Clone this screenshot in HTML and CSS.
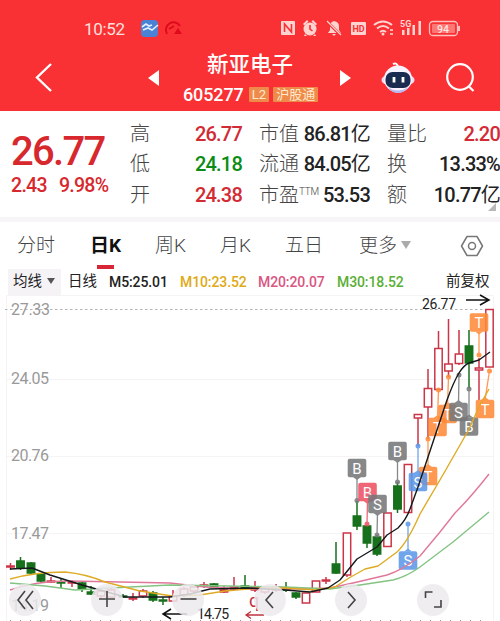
FILE: index.html
```html
<!DOCTYPE html>
<html lang="zh-CN">
<head>
  <meta charset="UTF-8">
  <title>新亚电子 605277</title>
  <link rel="stylesheet" href="styles.css">
</head>
<body>
  <header class="top">
    <div class="status">
      <span class="clock">10:52</span>
      <svg class="apps" width="44" height="20" viewBox="140 18 44 20">
        <rect x="141" y="20" width="17" height="17" rx="4" fill="#4a83d6"/>
        <path d="M142 27l4-3 3 2 3-1M143 30l5-2 4 2 6-5" fill="none" stroke="#e4f0ff" stroke-width="1.6"/>
        <path d="M167 34a7 7 0 0 1 13-8M169 29l5-3" fill="none" stroke="#df0b1d" stroke-width="2"/>
        <path d="M174 34l4-6 4 6z" fill="#df0b1d"/>
      </svg>
      <svg class="signals" width="184" height="22" viewBox="280 17 184 22">
        <g fill="#ffd3d0">
          <rect x="281" y="21" width="14" height="14" rx="1"/>
          <circle cx="310" cy="29" r="6.5"/>
          <path d="M303 24l4-4 1.500 1.500-4 4zM317 24l-4-4-1.500 1.500 4 4zM305 34l2 2h-3zM315 34l-2 2h3z"/>
          <path d="M328 33l2-3v-4q0-4 4-5 5 1 5 5v4l2 3zM332 34h4l-2 2z"/>
          <rect x="351" y="22" width="15" height="13" rx="1"/>
          <path d="M402 30h2.500v5h-2.500zM407 28h2.500v7h-2.500zM412.500 25h2.500v10h-2.500zM418.500 21h2.500v14h-2.500z"/>
        </g>
        <path d="M284.500 32v-8l7 8v-8M310 25v4l2.500 2" fill="none" stroke="#f93034" stroke-width="1.600"/>
        <path d="M326.500 21l15 15" stroke="#f93034" stroke-width="3"/>
        <path d="M327 21l14 14" stroke="#ffd3d0" stroke-width="1.300"/>
        <g fill="none" stroke="#ffd3d0" stroke-width="2">
          <path d="M374 25q9-7 18 0M377 28.500q6-5 12 0M380 32q3-2.500 6 0"/>
        </g>
        <circle cx="383" cy="34" r="1.500" fill="#ffd3d0"/>
        <path d="M390 30h3M390 34h3" stroke="#ffb3b0" stroke-width="2"/>
        <text class="hd" x="352.500" y="32">HD</text>
        <text class="fiveg" x="400" y="27">5G</text>
        <rect x="429.500" y="21.500" width="28" height="14" rx="3.500" fill="none" stroke="#ffc1bd" stroke-width="1.300"/>
        <rect x="432" y="24" width="23" height="9" rx="1" fill="#ff7774"/>
        <path d="M459 26v5" stroke="#ffc1bd" stroke-width="2"/>
        <text class="battery" x="437" y="32.500">94</text>
      </svg>
    </div>
    <div class="nav">
      <svg class="back" width="20" height="32" viewBox="0 0 20 32"><path d="M17 3L3 16.500 17 30" fill="none" stroke="#fff" stroke-width="2.400"/></svg>
      <svg class="prev" width="12" height="16" viewBox="0 0 12 16"><path d="M0 8L11 0v16z" fill="#fff"/></svg>
      <div class="title">
        <h1>新亚电子</h1>
        <div class="code"><b>605277</b><span class="tag">L2</span><span class="tag">沪股通</span></div>
      </div>
      <svg class="next" width="12" height="16" viewBox="0 0 12 16"><path d="M11 8L0 0v16z" fill="#fff"/></svg>
      <svg class="robot" width="36" height="34" viewBox="380 60 36 34">
        <path d="M393 63q4-2 5 3" fill="none" stroke="#fff" stroke-width="2"/>
        <ellipse cx="398" cy="79" rx="16.500" ry="7" fill="#f4d8ed"/>
        <ellipse cx="398" cy="78" rx="14" ry="13.500" fill="#f8f2ff"/>
        <path d="M387 86q11 7 22 0-5 6-11 6t-11-6" fill="#b8b8ef"/>
        <rect x="385.500" y="71" width="25" height="16" rx="7" fill="#192c50"/>
        <path d="M394 76v5.500M403 76v5.500" stroke="#fff" stroke-width="2.800"/>
      </svg>
      <svg class="search" width="32" height="32" viewBox="0 0 32 32"><circle cx="15" cy="15" r="12.800" fill="none" stroke="#fff" stroke-width="2.200"/><path d="M23.500 24l5 5" stroke="#fff" stroke-width="2.200"/></svg>
    </div>
  </header>

  <section class="quote">
    <div class="price">
      <div class="last">26.77</div>
      <div class="change"><span>2.43</span><span>9.98%</span></div>
    </div>
    <dl class="stats">
      <dt>高</dt><dd class="red">26.77</dd>
      <dt>市值</dt><dd>86.81<i>亿</i></dd>
      <dt>量比</dt><dd class="red">2.20</dd>
      <dt>低</dt><dd class="green">24.18</dd>
      <dt>流通</dt><dd>84.05<i>亿</i></dd>
      <dt>换</dt><dd>13.33%</dd>
      <dt>开</dt><dd class="red">24.38</dd>
      <dt>市盈<sup>TTM</sup></dt><dd>53.53</dd>
      <dt>额</dt><dd>10.77<i>亿</i></dd>
    </dl>
    <span class="corner"></span>
  </section>

  <nav class="tabs">
    <span>分时</span>
    <span class="active">日K</span>
    <span>周K</span>
    <span>月K</span>
    <span>五日</span>
    <span>更多<i class="caret"></i></span>
    <svg width="24" height="22" viewBox="0 0 24 22"><path d="M7 1.500h10L22.500 11 17 20.500H7L1.500 11z" fill="none" stroke="#777" stroke-width="1.500" stroke-linejoin="round"/><circle cx="12" cy="11" r="3.500" fill="none" stroke="#777" stroke-width="1.500"/></svg>
  </nav>

  <div class="legend">
    <span class="pick">均线<i class="caret"></i></span>
    <span class="period">日线</span>
    <span class="m5">M5:25.01</span>
    <span class="m10">M10:23.52</span>
    <span class="m20">M20:20.07</span>
    <span class="m30">M30:18.52</span>
    <span class="adjust">前复权</span>
  </div>

  <main class="chart">
    <svg id="kline" width="500" height="327" viewBox="0 294 500 327">
      <path d="M6.500 621V295.500h487V621M6.500 379.500h487M6.500 456.500h487M6.500 533.500h487" fill="none" stroke="#f6f3f5"/>
      <path d="M5 309.500h488" stroke="#b5b5b5" stroke-dasharray="2.500 2.500"/>
      <g class="axis">
        <text x="11" y="315" textLength="39">27.33</text>
        <text x="11" y="384" textLength="38">24.05</text>
        <text x="11" y="461" textLength="38">20.76</text>
        <text x="11" y="539" textLength="38">17.47</text>
        <text x="11" y="611" textLength="38">14.19</text>
      </g>
      <g id="candles"></g>
      <g id="signals"></g>
      <g class="averages">
        <path stroke="#e0789a" d="M10 590Q35 581 70 581L170 583 205 587 250 589 300 589 330 588 353 583 387 575C400 571 410 564 420 556L440 532 455 513 Q471 497 489 474"/>
        <path stroke="#83c483" d="M10 583L45 586 75 590 110 588 170 585 285 587 330 589 360 585 393 580C405 577 413 572 420 567L453 542 489 512"/>
        <path stroke="#dfab24" d="M10 579Q35 572 65 572 86 574 105 582L140 591 172 596 200 595 225 591 260 588 285 588 315 590 335 587 349 578 365 569 378 566 397 552C408 542 415 525 420 514L444 473 468 431 480 405 489 389"/>
        <path stroke="#16191c" d="M10 569L32 568 50 575 82 585 100 590 125 597 170 597 190 594 210 589 250 588 285 590 310 592 328 588 340 580 357 559 377 547 387 535 398 528Q406 520 410 509L418 487 447 400Q454 381 459 373 464 365 469 363L479 360 490 352"/>
      </g>
      <text class="mark" x="422" y="309" textLength="34">26.77</text>
      <path d="M466 300h22M480 295l9 5-9 5" fill="none" stroke="#111" stroke-width="1.500"/>
      <text class="mark" x="197" y="619" textLength="32">14.75</text>
      <path d="M187 614h-23M171 609l-8 5 8 5" fill="none" stroke="#111" stroke-width="1.500"/>
      <text class="mark rights" x="249" y="607">q</text>
      <path d="M264 615h-17M251 611.500l-5 3.500 5 3.500" fill="none" stroke="#bf3340" stroke-width="1.300"/>
      <path d="M10 620.500h480" stroke="#999" stroke-dasharray="1 9"/>
    </svg>
    <div class="controls">
      <button><svg viewBox="0 0 32 32"><path d="M16 7l-7 9 7 9M24 7l-7 9 7 9"/></svg></button>
      <button><svg viewBox="0 0 32 32"><path d="M8 15h16M16 7v16"/></svg></button>
      <button><svg viewBox="0 0 32 32"><path d="M8.500 15h16"/></svg></button>
      <button><svg viewBox="0 0 32 32"><path d="M19 8l-7 8 7 8"/></svg></button>
      <button><svg viewBox="0 0 32 32"><path d="M13 8l7 8-7 8"/></svg></button>
      <button><svg viewBox="0 0 32 32"><path d="M8.500 14V8h7M24 16v7h-7"/></svg></button>
    </div>
  </main>
  <script src="chart.js"></script>
</body>
</html>
```
FILE: styles.css
```css
* {
  box-sizing: border-box;
}
body {
  margin: 0;
  width: 500px;
  height: 621px;
  overflow: hidden;
  background: #fff;
  color: #222;
  font-family: Roboto, "Noto Sans CJK SC", sans-serif;
}
i {
  font-style: normal;
}

/* header */
.top {
  height: 111px;
  background: #f93034;
  color: #fff;
}
.status {
  height: 39px;
  padding: 17px 36px 0 84px;
  display: flex;
  align-items: center;
}
.clock {
  width: 56px;
  font-size: 17px;
  line-height: 22px;
  letter-spacing: -0.3px;
  color: #ffe0dd;
  padding-top: 1px;
}
.signals {
  margin-left: auto;
}
.hd {
  font: bold 9px Roboto, sans-serif;
  fill: #f93034;
}
.fiveg {
  font: bold 9px Roboto, sans-serif;
  fill: #ffd3d0;
}
.battery {
  font: 500 10.5px Roboto, sans-serif;
  fill: #ffe5e3;
}
.nav {
  height: 72px;
  display: grid;
  grid-template-columns: 34px 114px 12px 180px 40px 65px 55px;
  align-items: center;
}
.back {
  grid-column: 2;
  margin-top: 3px;
}
.prev,
.next,
.robot,
.search {
  margin-top: 5px;
}
.title {
  text-align: center;
}
.title h1 {
  margin: 5px 0 0;
  font-size: 21.500px;
  line-height: 33px;
  font-weight: 500;
}
.code {
  display: flex;
  justify-content: center;
  align-items: center;
  gap: 4px;
  height: 27px;
}
.code b {
  width: 63px;
  font-size: 18px;
  font-weight: 500;
  letter-spacing: -0.100px;
}
.tag {
  height: 15px;
  padding: 0 3px;
  border-radius: 1px;
  background: #ee8b4b;
  color: #ffe9cc;
  font-size: 13px;
  line-height: 15px;
}

/* quote */
.quote {
  position: relative;
  display: flex;
  height: 106px;
  padding-top: 8px;
}
.price {
  width: 130px;
  padding: 9px 0 0 11px;
  color: #d7282e;
}
.last {
  font-size: 40px;
  line-height: 47px;
  font-weight: 500;
  letter-spacing: -1.700px;
}
.change {
  display: flex;
  gap: 12px;
  font-size: 19.500px;
  line-height: 22px;
  font-weight: 500;
  letter-spacing: -0.700px;
}
.stats {
  display: grid;
  grid-template-columns: 48px 64px 61px 67px 60px 70px;
  grid-template-rows: repeat(3, 30.300px);
  width: 370px;
  margin: 0;
}
.stats dt:nth-of-type(3n + 2),
.stats dt:nth-of-type(3n) {
  padding-left: 17px;
}
.stats dt,
.stats dd {
  margin: 0;
  font-size: 20px;
  line-height: 31px;
  white-space: nowrap;
}
.stats dt {
  color: #444;
  font-weight: 300;
}
.stats dd {
  display: flex;
  justify-content: flex-end;
  font-weight: 500;
  letter-spacing: -0.800px;
}
.stats dd i {
  font-weight: 400;
}
.stats sup {
  font-size: 10px;
  line-height: 0;
  letter-spacing: -0.200px;
  vertical-align: 7px;
}
.stats .red {
  color: #d22b34;
}
.stats .green {
  color: #0b8d15;
}
.corner {
  position: absolute;
  right: 4px;
  bottom: 6px;
  border-left: 8px solid transparent;
  border-bottom: 8px solid #b9b9b9;
}

/* tabs */
.tabs {
  height: 52px;
  border-top: 5px solid #f7f5f7;
  display: grid;
  grid-template-columns: 73px 65px 65px 65px 74px 102px 24px;
  padding: 0 0 0 17px;
  align-items: center;
  color: #444;
  font-size: 19px;
  line-height: 46px;
  font-weight: 300;
  white-space: nowrap;
}
.tabs .active {
  justify-self: start;
  color: #111;
  font-weight: 700;
  background: linear-gradient(#d72736, #d72736) center bottom / 17px 4px no-repeat;
}
.tabs svg {
  margin-left: -1px;
}
.caret {
  display: inline-block;
  border: 5.500px solid transparent;
  border-top: 8px solid #aaa;
  border-bottom: 0;
  margin-left: 4px;
  vertical-align: 3px;
}

/* averages legend */
.legend {
  height: 25px;
  display: grid;
  grid-template-columns: 60px 41px 71px 78px 79px 109px 50px;
  padding-left: 8px;
  font-size: 14.500px;
  line-height: 26px;
  white-space: nowrap;
}
.pick {
  width: 53px;
  padding-left: 5px;
  background: #f5f3f6;
}
.pick .caret {
  border-width: 6px 4.500px 0;
  border-top-color: #555;
  margin-left: 5px;
  vertical-align: 2px;
}
.m5,
.m10,
.m20,
.m30 {
  font-weight: 500;
  font-size: 14px;
  letter-spacing: -0.100px;
}
.m10 {
  color: #deaa16;
}
.m20 {
  color: #d95582;
}
.m30 {
  color: #5aaf35;
}

/* chart */
.chart {
  position: relative;
  height: 327px;
}
.chart > svg {
  display: block;
}
.axis {
  font-size: 16px;
  fill: #999;
}
.mark {
  font-size: 14px;
  fill: #222;
}
.mark.rights {
  font-size: 18px;
  fill: #bf3340;
}
.averages {
  fill: none;
  stroke-width: 1.400;
  stroke-linejoin: round;
}
.badge {
  opacity: 0.88;
}
.badge text {
  font-size: 15px;
  fill: #fff;
  text-anchor: middle;
}
.controls {
  position: absolute;
  left: 9px;
  bottom: 5px;
  width: 440px;
  display: flex;
  justify-content: space-between;
}
.controls button {
  width: 32px;
  height: 32px;
  padding: 0;
  border: 0;
  border-radius: 50%;
  background: rgba(236, 234, 237, 0.85);
}
.controls svg {
  display: block;
  width: 32px;
  height: 32px;
  fill: none;
  stroke: #444;
  stroke-width: 1.600;
}
```
FILE: chart.js
```js
const RED = "#cb3547";
const GREEN = "#17701b";

// [x, high, body top, body bottom, low, type]  type: r hollow, d red doji, g green
const candles = [
  [10.5, 563, 566, 567, 570, "d"], [20.5, 557, 561, 568, 570, "g"],
  [31, 562, 563, 573, 575, "g"], [41, 573, 574, 581, 583, "g"],
  [51, 577, 581, 582, 583, "d"], [61, 578, 582, 583, 588, "g"],
  [72, 580, 582, 583, 587, "d"], [82, 581, 583, 589, 592, "g"],
  [91, 586, 592, 594, 595, "g"], [101, 590, 591, 596, 598, "r"],
  [111, 588, 590, 597, 598, "r"], [123, 594, 596, 597, 598, "g"],
  [133, 593, 598, 599, 601, "d"], [143, 589, 591, 596, 598, "r"],
  [153, 591, 593, 600, 602, "g"], [163, 597, 600, 601, 605, "g"],
  [173, 590, 596, 601, 602, "r"], [184, 587, 589, 595, 597, "r"],
  [194, 585, 587, 591, 593, "r"], [204, 582, 585, 586, 588, "d"],
  [214, 583, 584, 587, 588, "g"], [224, 586, 590, 592, 593, "d"],
  [234, 577, 587, 589, 590, "d"], [245, 575, 586, 588, 589, "g"],
  [255, 581, 588, 590, 592, "d"], [265, 586, 588, 592, 594, "r"],
  [276, 584, 587, 590, 592, "r"], [286, 582, 588, 590, 592, "g"],
  [296, 592, 593, 597, 599, "g"], [306, 593, 593, 603, 603, "r"],
  [316, 581, 581, 592, 592, "r"], [326, 577, 580, 581, 584, "d"],
  [336, 542, 564, 573, 574, "g"], [347, 533, 533, 575, 577, "r"],
  [357, 501, 516, 526, 530, "g"], [367, 525, 526, 543, 548, "g"],
  [377, 535, 537, 554, 556, "g"], [387.5, 513, 513, 546.5, 546.5, "r"],
  [397.5, 482, 486, 509, 513, "g"], [408, 464.5, 464.5, 512.5, 512.5, "r"],
  [418, 414, 414.5, 418, 446, "r"], [428, 369, 388.5, 407, 439, "r"],
  [438.5, 331, 348.5, 389.5, 390, "r"], [448.5, 319, 364, 371, 377, "r"],
  [459, 330, 354, 363.5, 365, "r"], [469, 330, 346, 363, 388, "g"],
  [479, 358, 368, 370, 400, "r"], [489.5, 309, 309.5, 367, 367, "r"]
];

const gray = "#77787a", orange = "#ff8a38", blue = "#5d99e9", pink = "#ed5365";

// [badge center x, badge center y, letter, color, dot x, dot y]
const signals = [
  [357, 468, "B", gray, 357, 500.5], [367.5, 492, "B", pink, 367, 524],
  [377.5, 504, "S", gray, 377, 535], [397.5, 451, "B", gray, 397.5, 482],
  [408, 560.5, "S", blue, 408, 524], [428, 476, "T", orange, 428, 439],
  [418, 482, "S", blue, 418, 446], [447.5, 414, "T", orange, 448.5, 377],
  [437.5, 427, "T", orange, 438.5, 390], [469, 426.5, "B", gray, 469, 389],
  [458.5, 412, "S", gray, 459, 375], [479, 322.5, "T", orange, 479, 355],
  [485, 409, "T", orange, 489.5, 371]
];

document.getElementById("candles").innerHTML = candles.map(([x, high, top, bottom, low, type]) => {
  const color = type === "g" ? GREEN : RED;
  const fill = type === "r" ? "#fff" : color;
  return `<path d="M${x} ${high}V${top}M${x} ${bottom}V${low}" stroke="${color}" stroke-width="1.5"/>
    <rect x="${x - 3.7}" y="${top}" width="7.4" height="${bottom - top}" fill="${fill}" stroke="${color}" stroke-width="1.5"/>`;
}).join("");

document.getElementById("signals").innerHTML = signals.map(([x, y, letter, color, dx, dy]) => {
  // the badge has a small tip on the side that faces its dot
  const side = dy > y ? 1 : -1;
  const edge = y + side * 9;
  return `<g class="badge">
    <path d="M${dx} ${dy}L${x} ${edge}" stroke="${color}" stroke-width="1.3"/>
    <circle cx="${dx}" cy="${dy}" r="2.5" fill="${color}"/>
    <rect x="${x - 9.3}" y="${y - 9.3}" width="18.6" height="18.6" rx="2" fill="${color}"/>
    <path d="M${x - 4} ${edge}L${x} ${edge + side * 3}L${x + 4} ${edge}z" fill="${color}"/>
    <text x="${x}" y="${y + 5.5}">${letter}</text>
  </g>`;
}).join("");
```
